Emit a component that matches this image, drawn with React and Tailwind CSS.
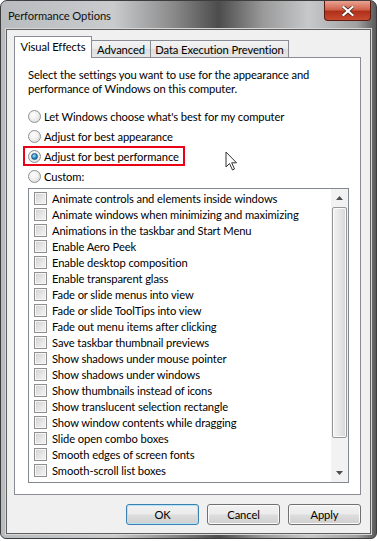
import React from 'react';

const items = [
  'Animate controls and elements inside windows',
  'Animate windows when minimizing and maximizing',
  'Animations in the taskbar and Start Menu',
  'Enable Aero Peek',
  'Enable desktop composition',
  'Enable transparent glass',
  'Fade or slide menus into view',
  'Fade or slide ToolTips into view',
  'Fade out menu items after clicking',
  'Save taskbar thumbnail previews',
  'Show shadows under mouse pointer',
  'Show shadows under windows',
  'Show thumbnails instead of icons',
  'Show translucent selection rectangle',
  'Show window contents while dragging',
  'Slide open combo boxes',
  'Smooth edges of screen fonts',
  'Smooth-scroll list boxes',
];

const Radio = ({ checked }) => (
  <span className="w-[13px] h-[13px] shrink-0 rounded-full border border-[#8e8f8f] bg-[radial-gradient(circle_at_40%_35%,#ffffff_0%,#f0f0f0_45%,#d4d4d4_100%)] flex items-center justify-center">
    {checked && (
      <span className="w-[7px] h-[7px] rounded-full bg-[radial-gradient(circle_at_40%_35%,#a9e1f9_0%,#2c8ac2_55%,#0d4e7c_100%)] border border-[#1a5a86]" />
    )}
  </span>
);

const RadioRow = ({ label, checked, children }) => (
  <div className="relative h-[20px] flex items-center gap-[3px] whitespace-nowrap">
    <Radio checked={checked} />
    <span>{label}</span>
    {children}
  </div>
);

const Button = ({ label, focused }) => (
  <div
    className={`w-[73px] h-[21px] rounded-[3px] flex items-center justify-center border ${
      focused
        ? 'border-[#3c7fb1] shadow-[inset_0_0_0_1px_#b4e3f8]'
        : 'border-[#707070] shadow-[inset_0_0_0_1px_#fbfbfb]'
    } bg-[linear-gradient(180deg,#f2f2f2_0%,#ebebeb_48%,#dddddd_52%,#cfcfcf_100%)]`}
  >
    {label}
  </div>
);

export default function App() {
  return (
    <div className="w-[377px] h-[541px] bg-white font-['Lato',sans-serif] text-[11.2px] tracking-[-0.1px] leading-[15px] text-black relative">
      <div className="w-[377px] h-[539px] rounded-t-[7px] rounded-b-[6px] border border-[#3d3d3d] bg-[linear-gradient(90deg,#b9bcbf_0%,#c9cbcd_30%,#8a8a8a_46%,#4c4c4c_58%,#9a9a9a_70%,#c6c8ca_82%,#a0a0a0_95%,#5a5a5a_100%)] flex flex-col overflow-hidden">
        {/* title bar */}
        <div className="h-[28px] flex items-start justify-between shrink-0">
          <div className="pl-[7px] pt-[7px] text-[#111] whitespace-nowrap">Performance Options</div>
          <div className="mr-[5px] w-[47px] h-[20px] rounded-b-[4px] border border-t-0 border-[#5c1a10] bg-[linear-gradient(180deg,#e8a493_0%,#d0624c_45%,#b0301a_55%,#c84a30_100%)] flex items-center justify-center">
            <svg width="12" height="10" viewBox="0 0 12 10">
              <path d="M1.5 1 L10.5 9 M10.5 1 L1.5 9" stroke="#3a1a14" strokeWidth="3.6" strokeLinecap="square" />
              <path d="M1.5 1 L10.5 9 M10.5 1 L1.5 9" stroke="#ffffff" strokeWidth="2.2" strokeLinecap="square" />
            </svg>
          </div>
        </div>

        {/* client area */}
        <div className="mx-[5px] h-[505px] border border-[#5f5f5f] bg-[#f0f0f0] shadow-[0_0_0_1px_#d8d8d8] px-[7px] pt-[6px] flex flex-col">
          {/* tabs */}
          <div className="flex items-end h-[21px] relative z-10 whitespace-nowrap">
            <div className="w-[78px] h-[22px] border border-b-0 border-[#898c95] bg-white flex items-start justify-center pt-[2px] -mb-px">
              Visual Effects
            </div>
            <div className="w-[59px] h-[17px] border border-l-0 border-b-0 border-[#898c95] bg-[linear-gradient(180deg,#f3f3f3_0%,#ebebeb_50%,#dedede_51%,#e6e6e6_100%)] flex items-center justify-center">
              Advanced
            </div>
            <div className="w-[138px] h-[17px] border border-l-0 border-b-0 border-[#898c95] bg-[linear-gradient(180deg,#f3f3f3_0%,#ebebeb_50%,#dedede_51%,#e6e6e6_100%)] flex items-center justify-center">
              Data Execution Prevention
            </div>
          </div>

          {/* panel */}
          <div className="w-[347px] h-[438px] border border-[#898c95] bg-white pl-[13px] pt-[10px] flex flex-col">
            <p className="w-[300px] leading-[14px]">
              Select the settings you want to use for the appearance and performance of Windows on this computer.
            </p>
            <div className="mt-[10px] flex flex-col">
              <RadioRow label="Let Windows choose what's best for my computer" />
              <RadioRow label="Adjust for best appearance" />
              <RadioRow label="Adjust for best performance" checked>
                <div className="absolute left-[-5px] top-[0px] w-[162px] h-[20px] border-2 border-[#ec0016]" />
                <svg className="absolute left-[197px] top-[5px]" width="14" height="21" viewBox="0 0 14 21">
                  <path d="M1 1 L1 16 L4.5 12.5 L7.5 19 L9.5 18 L6.7 11.8 L11.5 11.8 Z" fill="#ffffff" stroke="#333" strokeWidth="1" strokeLinejoin="round" />
                </svg>
              </RadioRow>
              <RadioRow label="Custom:" />
            </div>

            {/* list box */}
            <div className="mt-[2px] w-[321px] h-[295px] border border-[#828790] bg-white flex">
              <div className="flex-1 pt-px whitespace-nowrap overflow-hidden">
                {items.map((t) => (
                  <div key={t} className="h-[16px] flex items-center pl-[5px] gap-[5px]">
                    <span className="w-[13px] h-[13px] shrink-0 border border-[#8e8f8f] bg-[linear-gradient(135deg,#cfcfcf_0%,#e8e8e8_60%,#f4f4f4_100%)] shadow-[inset_0_0_0_1px_#f6f6f6]" />
                    <span>{t}</span>
                  </div>
                ))}
              </div>
              <div className="w-[17px] shrink-0 bg-[#f2f2f2] flex flex-col items-center">
                <div className="h-[18px] w-full flex items-center justify-center">
                  <svg width="7" height="4" viewBox="0 0 7 4"><path d="M0 4 L3.5 0 L7 4 Z" fill="#4d4d4d" /></svg>
                </div>
                <div className="w-[15px] h-[231px] rounded-[2px] border border-[#979797] bg-[linear-gradient(90deg,#f3f3f3_0%,#e6e6e6_50%,#d6d6d6_100%)] shadow-[inset_0_0_0_1px_#fafafa]" />
                <div className="flex-1" />
                <div className="h-[18px] w-full flex items-center justify-center">
                  <svg width="7" height="4" viewBox="0 0 7 4"><path d="M0 0 L7 0 L3.5 4 Z" fill="#4d4d4d" /></svg>
                </div>
              </div>
            </div>
          </div>

          {/* buttons */}
          <div className="mt-[9px] w-[347px] flex justify-end gap-[8px]">
            <Button label="OK" focused />
            <Button label="Cancel" />
            <Button label="Apply" />
          </div>
        </div>
      </div>
    </div>
  );
}
